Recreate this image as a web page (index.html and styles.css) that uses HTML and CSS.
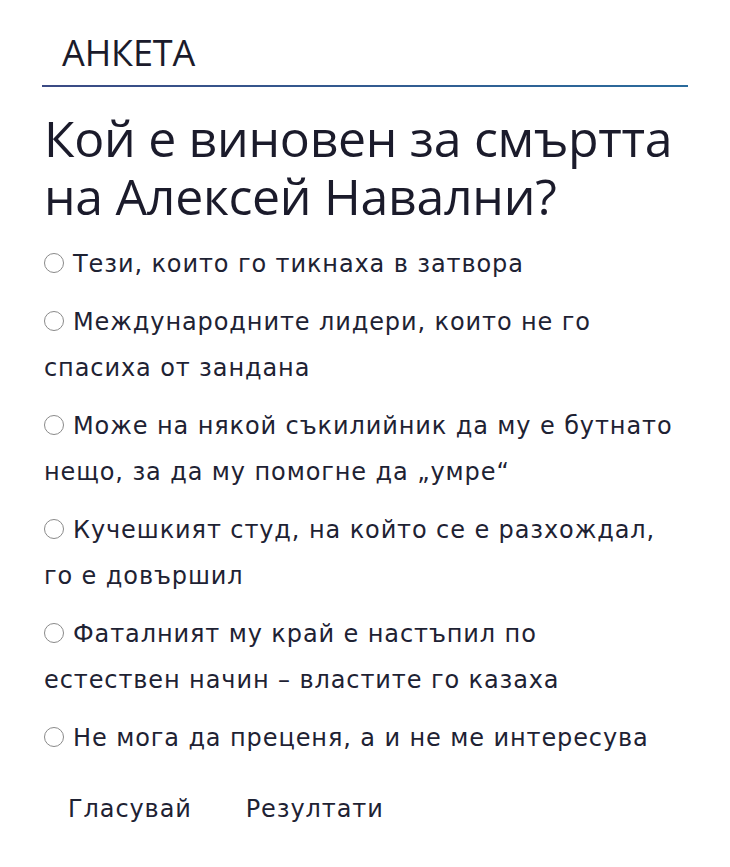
FILE: index.html
```html
<!DOCTYPE html>
<html lang="bg">
<head>
<meta charset="utf-8">
<link rel="stylesheet" href="styles.css">
</head>
<body>
<div class="poll">
  <div class="poll-head"><h2 class="poll-label">АНКЕТА</h2></div>
  <h1 class="poll-question">Кой е виновен за смъртта на Алексей Навални?</h1>
  <ul class="poll-options">
    <li class="poll-option"><span class="radio"></span>Тези, които го тикнаха в затвора</li>
    <li class="poll-option"><span class="radio"></span>Международните лидери, които не го спасиха от зандана</li>
    <li class="poll-option"><span class="radio"></span>Може на някой съкилийник да му е бутнато нещо, за да му помогне да „умре“</li>
    <li class="poll-option"><span class="radio"></span>Кучешкият студ, на който се е разхождал, го е довършил</li>
    <li class="poll-option"><span class="radio"></span>Фаталният му край е настъпил по<br>естествен начин – властите го казаха</li>
    <li class="poll-option"><span class="radio"></span>Не мога да преценя, а и не ме интересува</li>
  </ul>
  <div class="poll-actions">
    <button class="poll-btn">Гласувай</button>
    <button class="poll-btn">Резултати</button>
  </div>
</div>
</body>
</html>
```
FILE: styles.css
```css
html, body { margin: 0; padding: 0; background: #fff; }
body { font-family: "Open Sans", "Noto Sans", sans-serif; color: #1b1b2b; }
.poll { width: 646px; margin-left: 42px; padding-top: 30px; }
.poll-head { padding-left: 20px; height: 57px;
  background-image: linear-gradient(90deg, #3b4a84, #2a6b9c);
  background-size: 100% 2px; background-repeat: no-repeat; background-position: bottom; }
.poll-label { margin: 0; font-weight: 400; font-size: 36px; line-height: 46px; letter-spacing: -0.1px; }
.poll-question { margin: 22px 0 0 2px; font-weight: 400; font-size: 50px; line-height: 58px; letter-spacing: -0.3px; }
.poll-options { list-style: none; margin: 16px 0 0 2px; padding: 0; font-family: "DejaVu Sans", "Open Sans", sans-serif; }
.poll-option { font-size: 24px; line-height: 46px; margin-bottom: 12px; color: #1e2233; letter-spacing: 0.9px; }
.radio { display: inline-block; box-sizing: border-box; width: 20px; height: 20px; border: 1.5px solid #8a8a8a; border-radius: 50%; margin-right: 9px; vertical-align: -1px; }
.poll-actions { display: flex; gap: 54px; margin-top: 34px; padding-left: 26px; }
.poll-btn { font-family: "DejaVu Sans", "Open Sans", sans-serif; font-size: 24px; letter-spacing: 0.9px; color: #1e2233; background: none; border: 0; padding: 0; cursor: pointer; }
```
